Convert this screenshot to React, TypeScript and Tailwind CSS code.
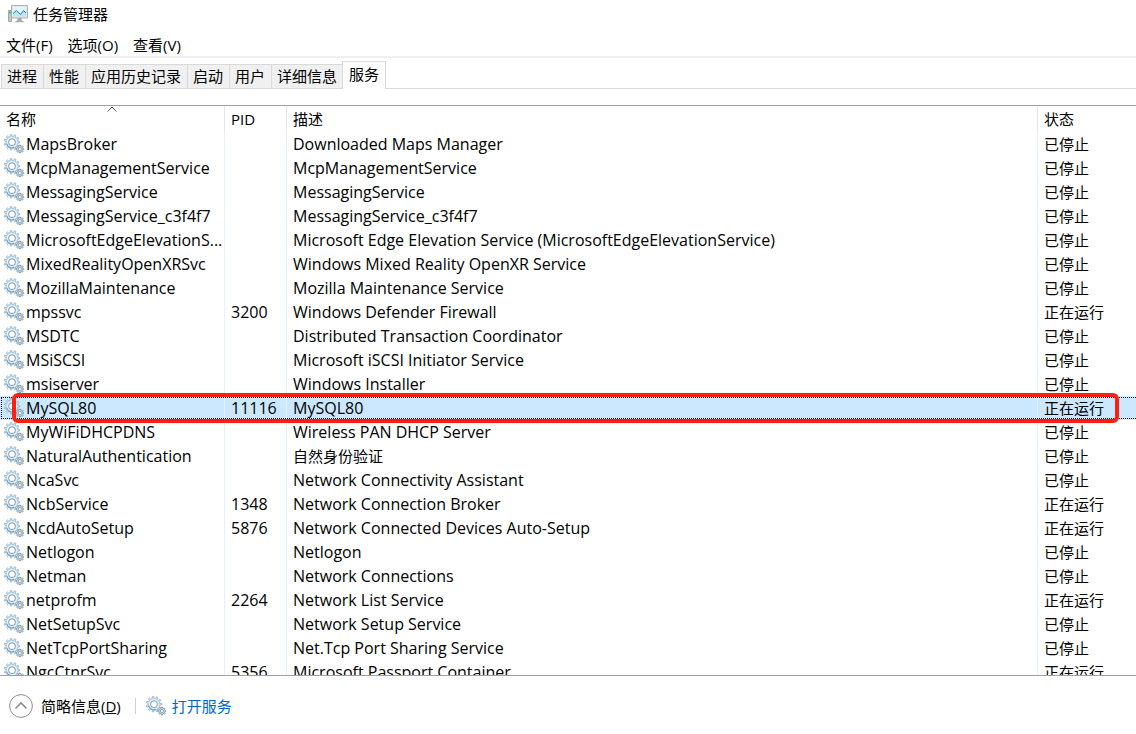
import { useState } from "react";
import { clsx } from "clsx";

type Service = {
  name: string;
  pid?: string;
  description: string;
};

const menus = ["文件(F)", "选项(O)", "查看(V)"];
const tabs = ["进程", "性能", "应用历史记录", "启动", "用户", "详细信息", "服务"];

// A service with a PID is running, the others are stopped
const services: Service[] = [
  { name: "MapsBroker", description: "Downloaded Maps Manager" },
  { name: "McpManagementService", description: "McpManagementService" },
  { name: "MessagingService", description: "MessagingService" },
  { name: "MessagingService_c3f4f7", description: "MessagingService_c3f4f7" },
  { name: "MicrosoftEdgeElevationS...", description: "Microsoft Edge Elevation Service (MicrosoftEdgeElevationService)" },
  { name: "MixedRealityOpenXRSvc", description: "Windows Mixed Reality OpenXR Service" },
  { name: "MozillaMaintenance", description: "Mozilla Maintenance Service" },
  { name: "mpssvc", pid: "3200", description: "Windows Defender Firewall" },
  { name: "MSDTC", description: "Distributed Transaction Coordinator" },
  { name: "MSiSCSI", description: "Microsoft iSCSI Initiator Service" },
  { name: "msiserver", description: "Windows Installer" },
  { name: "MySQL80", pid: "11116", description: "MySQL80" },
  { name: "MyWiFiDHCPDNS", description: "Wireless PAN DHCP Server" },
  { name: "NaturalAuthentication", description: "自然身份验证" },
  { name: "NcaSvc", description: "Network Connectivity Assistant" },
  { name: "NcbService", pid: "1348", description: "Network Connection Broker" },
  { name: "NcdAutoSetup", pid: "5876", description: "Network Connected Devices Auto-Setup" },
  { name: "Netlogon", description: "Netlogon" },
  { name: "Netman", description: "Network Connections" },
  { name: "netprofm", pid: "2264", description: "Network List Service" },
  { name: "NetSetupSvc", description: "Network Setup Service" },
  { name: "NetTcpPortSharing", description: "Net.Tcp Port Sharing Service" },
  { name: "NgcCtnrSvc", pid: "5356", description: "Microsoft Passport Container" },
];

// Latin text runs one pixel larger than Chinese text in the list
const isLatin = (text: string) => /^[\x20-\x7e]*$/.test(text);

const gearPath = (cx: number, cy: number, outer: number, inner: number, teeth: number) => {
  const step = (Math.PI * 2) / teeth;
  const at = (r: number, a: number) => `${(cx + r * Math.cos(a)).toFixed(2)} ${(cy + r * Math.sin(a)).toFixed(2)}`;
  let d = "";
  for (let i = 0; i < teeth; i++) {
    const a = i * step;
    d += `${i ? "L" : "M"}${at(inner, a - step * 0.3)}L${at(outer, a - step * 0.18)}L${at(outer, a + step * 0.18)}L${at(inner, a + step * 0.3)}`;
  }
  return d + "Z";
};

const bigGear = gearPath(8, 8.2, 7.8, 5.9, 11);
const smallGear = gearPath(15.9, 15, 4, 3, 8);

function GearsIcon() {
  return (
    <svg viewBox="0 0 20 20" className="size-5 shrink-0" aria-hidden="true">
      <path d={bigGear} fill="#c8e2f2" stroke="#86a0b2" strokeWidth="0.6" />
      <circle cx="8" cy="8.2" r="4.5" fill="none" stroke="#dff1fb" strokeWidth="1.4" />
      <circle cx="8" cy="8.2" r="3.4" fill="#fff" stroke="#6d8798" strokeWidth="0.8" />
      <path d="M2.6 9.6a5.6 5.6 0 0 0 7.6 3.7" fill="none" stroke="#6fa3c8" strokeWidth="1.1" />
      <path d={smallGear} fill="#c9dce8" stroke="#6a8496" strokeWidth="0.7" />
      <circle cx="15.9" cy="15" r="1.6" fill="#fff" stroke="#6f8a9d" strokeWidth="0.7" />
    </svg>
  );
}

function MonitorIcon() {
  return (
    <svg viewBox="0 0 20 18" className="h-[18px] w-5 shrink-0" aria-hidden="true">
      <path d="M0.5 5.5h3v11h-3z" fill="#c3c6c8" stroke="#94999c" strokeWidth="0.8" />
      <path d="M1 6.5h1.8v2H1z" fill="#3fc54a" />
      <path d="M9.5 13h4v2l3 2.2H6.5l3-2.2z" fill="#a7abae" />
      <path d="M3.5 0.5h16v12.5h-16z" fill="#e4e6e7" stroke="#a5aaad" strokeWidth="0.9" />
      <path d="M5 2h13v9.5H5z" fill="#e3f5fd" />
      <path d="M5 8.5l3.5-3 4 4 3-4 2.5 2.5v3.5H5z" fill="#bfe6f8" />
      <path d="M5 8.5l3.5-3 4 4 3-4 2.5 2.5" fill="none" stroke="#1d79b5" strokeWidth="1" />
    </svg>
  );
}

export default function App() {
  const [tab, setTab] = useState("服务");
  const [selected, setSelected] = useState("MySQL80");

  return (
    <div className="flex h-screen flex-col overflow-hidden bg-white font-['Open_Sans','Noto_Sans_CJK_SC',sans-serif] text-[15px] leading-6 text-black">
      <header className="flex h-7 shrink-0 items-center gap-[5px] pl-2">
        <MonitorIcon />
        <h1>任务管理器</h1>
      </header>

      <nav className="flex h-[30px] shrink-0 items-center gap-[15px] border-b-2 border-[#f0f0f0] pt-[6px] pl-[6px]">
        {menus.map((m) => (
          <button key={m}>{m}</button>
        ))}
      </nav>

      {/* Tabs */}
      <div role="tablist" className="mt-[3px] flex h-7 shrink-0 items-end border-b border-[#d9d9d9] pl-px">
        {tabs.map((t) => (
          <button
            key={t}
            role="tab"
            aria-selected={t === tab}
            onClick={() => setTab(t)}
            className={clsx(
              "border-[#d9d9d9] leading-[22px] whitespace-nowrap",
              t === tab
                ? "-mb-px -ml-px h-7 border-x border-t bg-white px-[6px] pb-[4px]"
                : "h-6 border-t border-l bg-[#f0f0f0] pr-[6px] pb-px pl-[5px]"
            )}
          >
            {t}
          </button>
        ))}
      </div>

      {/* Service list */}
      <main className="mt-4 min-h-0 flex-1 overflow-hidden border-y border-[#a0a0a0]">
        <table className="w-full table-fixed border-separate border-spacing-0 text-left">
          <colgroup>
            <col className="w-[225px]" />
            <col className="w-[62px]" />
            <col />
            <col className="w-[98px]" />
          </colgroup>
          <thead>
            <tr className="h-[26px] *:border-r *:border-[#e5e5e5] *:p-0 *:pl-[6px] *:font-normal *:last:border-r-0">
              <th aria-sort="ascending" className="relative">
                名称
                <svg viewBox="0 0 10 6" className="absolute inset-x-0 top-0 mx-auto h-[6px] w-[10px]" aria-hidden="true">
                  <path d="M0.5 5.5L5 1l4.5 4.5" fill="none" stroke="#5a5a5a" />
                </svg>
              </th>
              <th>PID</th>
              <th>描述</th>
              <th>状态</th>
            </tr>
          </thead>
          <tbody>
            {services.map((s) => {
              const active = s.name === selected;
              return (
                <tr
                  key={s.name}
                  aria-selected={active}
                  onClick={() => setSelected(s.name)}
                  className={clsx(
                    "relative h-6 *:border-r *:border-[#e5f0fc] *:p-0 *:pl-[6px] *:whitespace-nowrap *:last:border-r-0",
                    active && "bg-[#cce8ff]"
                  )}
                >
                  <td className="text-base leading-6">
                    <div className="-ml-[2px] flex items-center gap-[2px]">
                      <GearsIcon />
                      <span>{s.name}</span>
                    </div>
                  </td>
                  <td className="text-base leading-6">{s.pid}</td>
                  <td className={clsx(isLatin(s.description) && "text-base leading-6")}>{s.description}</td>
                  <td>
                    {s.pid ? "正在运行" : "已停止"}
                    {active && (
                      <>
                        <span className="pointer-events-none absolute inset-y-px right-0 left-px border-y border-l border-dotted border-black" />
                        <span className="pointer-events-none absolute -inset-y-[3px] right-[17px] left-3 z-10 rounded-md border-4 border-[#fb2112]" />
                      </>
                    )}
                  </td>
                </tr>
              );
            })}
          </tbody>
        </table>
      </main>

      <footer className="flex h-[58px] shrink-0 items-center pt-[2px] pl-[9px]">
        <button className="flex items-center gap-2">
          <svg viewBox="0 0 24 24" className="size-6" aria-hidden="true">
            <circle cx="12" cy="12" r="11.4" fill="none" stroke="#8c8c8c" />
            <path d="M6.5 14.5L12 9l5.5 5.5" fill="none" stroke="#8c8c8c" strokeWidth="1.6" />
          </svg>
          <span>
            简略信息(<u>D</u>)
          </span>
        </button>
        <span className="mr-[10px] ml-[14px] h-4 w-px bg-[#d0d0d0]" />
        <a href="#services" className="flex items-center gap-[6px] text-[#0066cc]">
          <GearsIcon />
          打开服务
        </a>
      </footer>
    </div>
  );
}
